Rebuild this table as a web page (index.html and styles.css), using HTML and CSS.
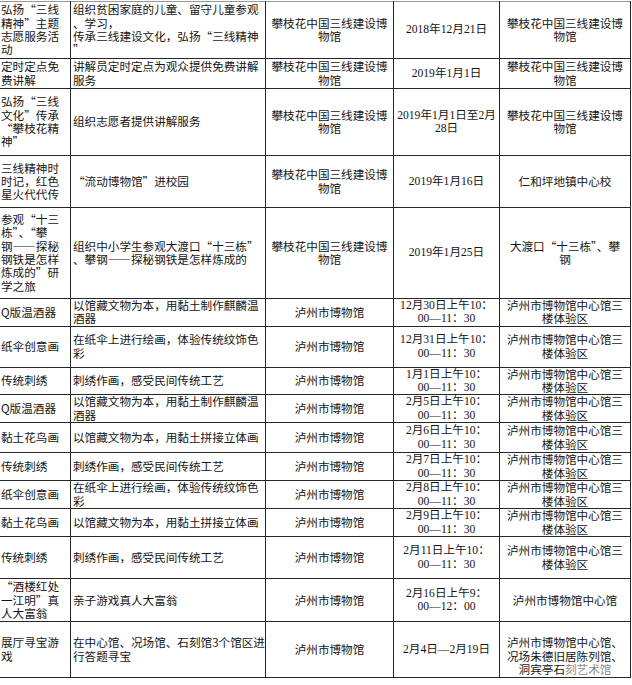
FILE: index.html
```html
<!DOCTYPE html>
<html lang="zh-CN">
<head>
<meta charset="utf-8">
<title>活动安排表</title>
<link rel="stylesheet" href="styles.css">
</head>
<body>
<table class="sched">
<colgroup>
<col class="c1"><col class="c2"><col class="c3"><col class="c4"><col class="c5">
</colgroup>
<tbody>
<tr class="r1">
<td class="name">弘扬“三线<br>精神”主题<br>志愿服务活<br>动</td>
<td class="desc">组织贫困家庭的儿童、留守儿童参观<br>、学习，<br>传承三线建设文化，弘扬“三线精神<br>”</td>
<td class="ctr">攀枝花中国三线建设博<br>物馆</td>
<td class="date">2018年12月21日</td>
<td class="ctr">攀枝花中国三线建设博<br>物馆</td>
</tr>
<tr class="r2">
<td class="name">定时定点免<br>费讲解</td>
<td class="desc">讲解员定时定点为观众提供免费讲解<br>服务</td>
<td class="ctr">攀枝花中国三线建设博<br>物馆</td>
<td class="date">2019年1月1日</td>
<td class="ctr">攀枝花中国三线建设博<br>物馆</td>
</tr>
<tr class="r3">
<td class="name">弘扬“三线<br>文化”传承<br>“攀枝花精<br>神”</td>
<td class="desc">组织志愿者提供讲解服务</td>
<td class="ctr">攀枝花中国三线建设博<br>物馆</td>
<td class="date">2019年1月1日至2月<br>28日</td>
<td class="ctr">攀枝花中国三线建设博<br>物馆</td>
</tr>
<tr class="r4">
<td class="name">三线精神时<br>时记，红色<br>星火代代传</td>
<td class="desc">“流动博物馆”进校园</td>
<td class="ctr">攀枝花中国三线建设博<br>物馆</td>
<td class="date">2019年1月16日</td>
<td class="ctr">仁和坪地镇中心校</td>
</tr>
<tr class="r5">
<td class="name">参观“十三<br>栋”、“攀<br>钢——探秘<br>钢铁是怎样<br>炼成的”研<br>学之旅</td>
<td class="desc">组织中小学生参观大渡口“十三栋”<br>、攀钢——探秘钢铁是怎样炼成的</td>
<td class="ctr">攀枝花中国三线建设博<br>物馆</td>
<td class="date">2019年1月25日</td>
<td class="ctr">大渡口“十三栋”、攀<br>钢</td>
</tr>
<tr class="r6">
<td class="name">Q版温酒器</td>
<td class="desc">以馆藏文物为本，用黏土制作麒麟温<br>酒器</td>
<td class="ctr">泸州市博物馆</td>
<td class="date">12月30日上午10：<br>00—11：30</td>
<td class="ctr">泸州市博物馆中心馆三<br>楼体验区</td>
</tr>
<tr class="r7">
<td class="name">纸伞创意画</td>
<td class="desc">在纸伞上进行绘画，体验传统纹饰色<br>彩</td>
<td class="ctr">泸州市博物馆</td>
<td class="date">12月31日上午10：<br>00—11：30</td>
<td class="ctr">泸州市博物馆中心馆三<br>楼体验区</td>
</tr>
<tr class="r8">
<td class="name">传统刺绣</td>
<td class="desc">刺绣作画，感受民间传统工艺</td>
<td class="ctr">泸州市博物馆</td>
<td class="date">1月1日上午10：<br>00—11：30</td>
<td class="ctr">泸州市博物馆中心馆三<br>楼体验区</td>
</tr>
<tr class="r9">
<td class="name">Q版温酒器</td>
<td class="desc">以馆藏文物为本，用黏土制作麒麟温<br>酒器</td>
<td class="ctr">泸州市博物馆</td>
<td class="date">2月5日上午10：<br>00—11：30</td>
<td class="ctr">泸州市博物馆中心馆三<br>楼体验区</td>
</tr>
<tr class="r10">
<td class="name">黏土花鸟画</td>
<td class="desc">以馆藏文物为本，用黏土拼接立体画</td>
<td class="ctr">泸州市博物馆</td>
<td class="date">2月6日上午10：<br>00—11：30</td>
<td class="ctr">泸州市博物馆中心馆三<br>楼体验区</td>
</tr>
<tr class="r11">
<td class="name">传统刺绣</td>
<td class="desc">刺绣作画，感受民间传统工艺</td>
<td class="ctr">泸州市博物馆</td>
<td class="date">2月7日上午10：<br>00—11：30</td>
<td class="ctr">泸州市博物馆中心馆三<br>楼体验区</td>
</tr>
<tr class="r12">
<td class="name">纸伞创意画</td>
<td class="desc">在纸伞上进行绘画，体验传统纹饰色<br>彩</td>
<td class="ctr">泸州市博物馆</td>
<td class="date">2月8日上午10：<br>00—11：30</td>
<td class="ctr">泸州市博物馆中心馆三<br>楼体验区</td>
</tr>
<tr class="r13">
<td class="name">黏土花鸟画</td>
<td class="desc">以馆藏文物为本，用黏土拼接立体画</td>
<td class="ctr">泸州市博物馆</td>
<td class="date">2月9日上午10：<br>00—11：30</td>
<td class="ctr">泸州市博物馆中心馆三<br>楼体验区</td>
</tr>
<tr class="r14">
<td class="name">传统刺绣</td>
<td class="desc">刺绣作画，感受民间传统工艺</td>
<td class="ctr">泸州市博物馆</td>
<td class="date">2月11日上午10：<br>00—11：30</td>
<td class="ctr">泸州市博物馆中心馆三<br>楼体验区</td>
</tr>
<tr class="r15">
<td class="name">“酒楼红处<br>一江明”真<br>人大富翁</td>
<td class="desc">亲子游戏真人大富翁</td>
<td class="ctr">泸州市博物馆</td>
<td class="date">2月16日上午9：<br>00—12：00</td>
<td class="ctr">泸州市博物馆中心馆</td>
</tr>
<tr class="r16">
<td class="name">展厅寻宝游<br>戏</td>
<td class="desc">在中心馆、况场馆、石刻馆3个馆区进<br>行答题寻宝</td>
<td class="ctr">泸州市博物馆</td>
<td class="date">2月4日—2月19日</td>
<td class="ctr last">泸州市博物馆中心馆、<br>况场朱德旧居陈列馆、<br>洞宾亭石<span class="mark">刻艺术馆</span></td>
</tr>
</tbody>
</table>
</body>
</html>
```
FILE: styles.css
```css
html, body {
  margin: 0;
  padding: 0;
  background: #ffffff;
}

body {
  width: 632px;
  height: 685px;
  overflow: hidden;
}

.sched {
  border-collapse: collapse;
  table-layout: fixed;
  width: 634px;
  margin: 1px 0 0 -4px;
  font-family: "Noto Sans CJK SC", "Noto Sans", sans-serif;
  font-size: 11.6px;
  line-height: 13.3px;
  color: #151515;
}

.c1 { width: 74px; }
.c2 { width: 195px; }
.c3 { width: 128px; }
.c4 { width: 106px; }
.c5 { width: 131px; }

.sched td {
  border: 1px solid #262626;
  padding: 0 1px;
  vertical-align: middle;
  white-space: nowrap;
  overflow: hidden;
}

.sched tr:first-child td {
  border-top-color: #9a9a9a;
}

.sched td.name {
  padding-left: 4px;
  text-align: left;
}

.sched td.desc {
  padding-left: 2px;
  text-align: left;
}

.sched td.ctr {
  text-align: center;
}

.sched td.date {
  text-align: center;
  font-family: "Liberation Serif", "Noto Sans CJK SC", serif;
}

.sched td.last {
  vertical-align: bottom;
  padding-bottom: 1px;
}

.mark {
  color: #8a8a8a;
}

.r1 { height: 57px; }
.r2 { height: 30px; }
.r3 { height: 67px; }
.r4 { height: 52px; }
.r5 { height: 91px; }
.r6 { height: 27px; }
.r7 { height: 41px; }
.r8 { height: 27px; }
.r9 { height: 28px; }
.r10 { height: 30px; }
.r11 { height: 28px; }
.r12 { height: 28px; }
.r13 { height: 28px; }
.r14 { height: 42px; }
.r15 { height: 43px; }
.r16 { height: 56px; }
```
